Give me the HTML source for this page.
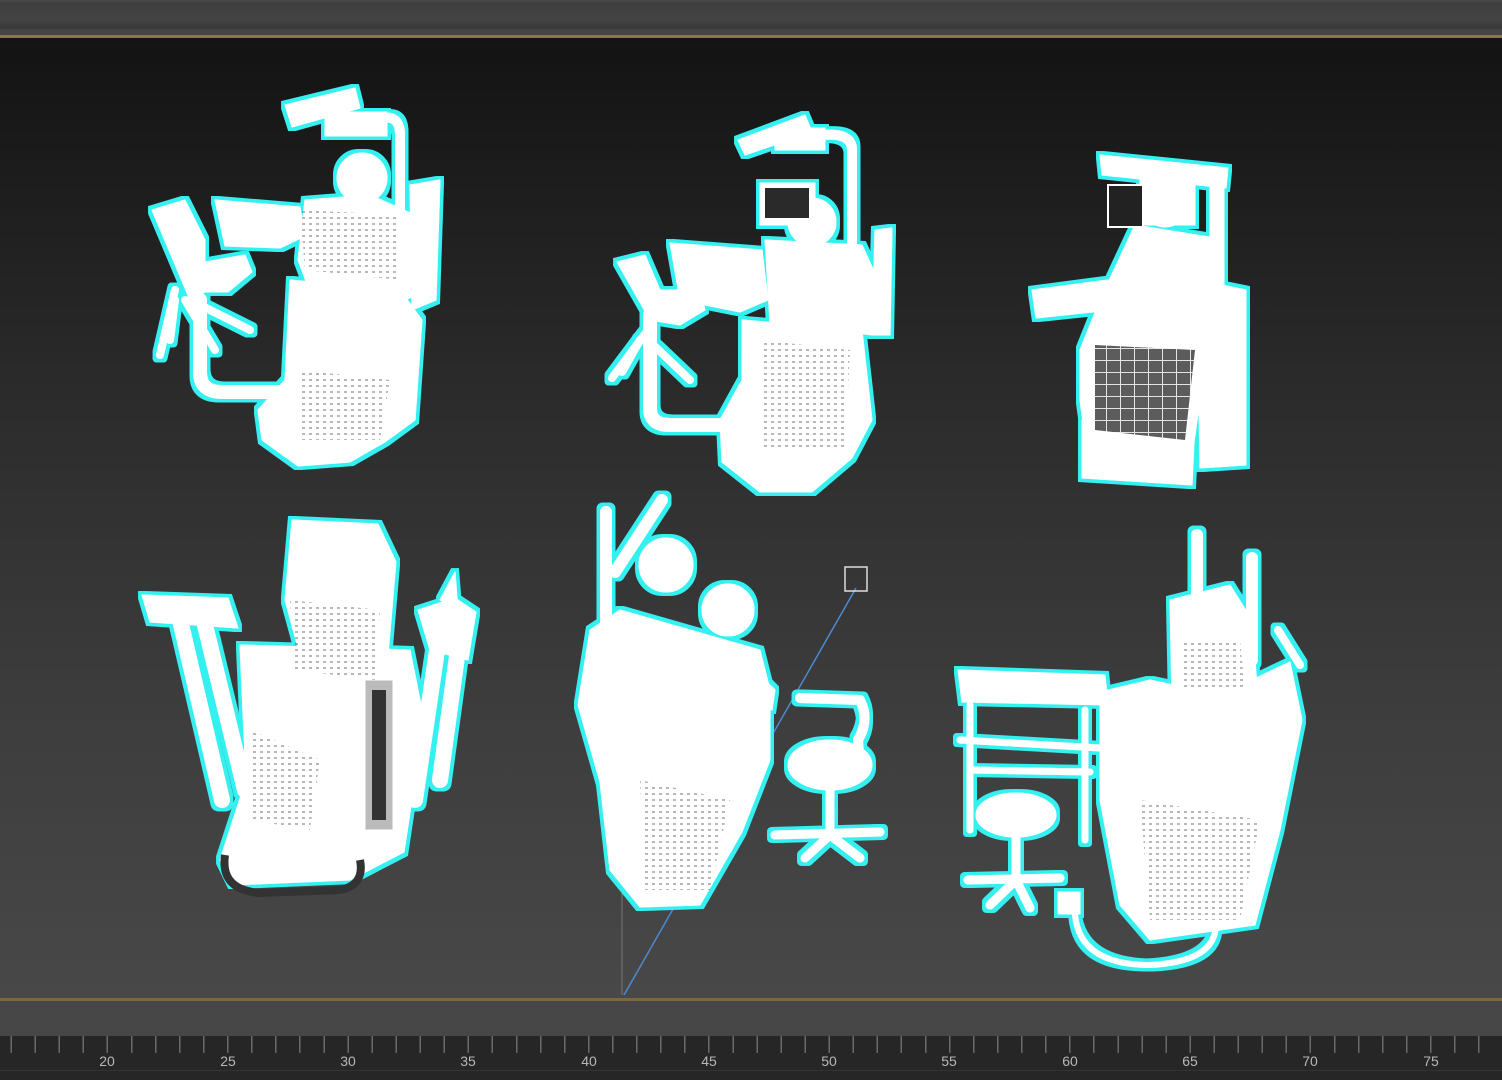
<!DOCTYPE html>
<html><head><meta charset="utf-8"><style>
html,body{margin:0;padding:0;width:1502px;height:1080px;overflow:hidden;background:#2a2a2a}
.top{position:absolute;left:0;top:0;width:1502px;height:36px;background:linear-gradient(#4a4a4a,#3e3e3e 3px,#444 20px,#383838 28px,#454545 30px)}
.g1{position:absolute;left:0;top:35px;width:1502px;height:3px;background:#8a7840}
.vp{position:absolute;left:0;top:38px;width:1502px;height:960px;background:linear-gradient(#131313,#2a2a2a 35%,#3d3d3d 70%,#484848)}
.g2{position:absolute;left:0;top:998px;width:1502px;height:3px;background:#7a6a3a}
.bar{position:absolute;left:0;top:1001px;width:1502px;height:35px;background:#474747}
.rul{position:absolute;left:0;top:1036px;width:1502px;height:44px;background:#262626}
.ticks{position:absolute;left:0;top:1036px;width:1502px;height:17px;background:repeating-linear-gradient(90deg,transparent 0,transparent 10.5px,#6a6a6a 10.5px,#6a6a6a 12px,transparent 12px,transparent 24.06px)}
.lab{position:absolute;top:1053px;font:14px "Liberation Sans",sans-serif;color:#b8b8b8;transform:translateX(-50%)}
.ln{position:absolute;left:0;top:1070px;width:1502px;height:1px;background:#333}
svg{position:absolute;left:0;top:0}
</style></head><body>
<div class="top"></div><div class="g1"></div><div class="vp"></div><div class="g2"></div><div class="bar"></div>
<div class="rul"></div><div class="ticks"></div><div class="ln"></div>
<div class="lab" style="left:107px">20</div><div class="lab" style="left:228px">25</div><div class="lab" style="left:348px">30</div><div class="lab" style="left:468px">35</div><div class="lab" style="left:589px">40</div><div class="lab" style="left:709px">45</div><div class="lab" style="left:829px">50</div><div class="lab" style="left:949px">55</div><div class="lab" style="left:1070px">60</div><div class="lab" style="left:1190px">65</div><div class="lab" style="left:1310px">70</div><div class="lab" style="left:1431px">75</div>
<svg width="1502" height="1000" viewBox="0 0 1502 1000">
<defs>
<filter id="o" x="-10%" y="-10%" width="120%" height="120%">
<feMorphology in="SourceAlpha" operator="dilate" radius="3.5" result="d"/>
<feFlood flood-color="#36f0f0"/><feComposite in2="d" operator="in" result="c"/>
<feMerge><feMergeNode in="c"/><feMergeNode in="SourceGraphic"/></feMerge>
</filter>
<pattern id="dots" width="7" height="6" patternUnits="userSpaceOnUse"><rect x="1" y="1" width="3" height="2" fill="#333"/></pattern>
<pattern id="grid" width="14" height="12" patternUnits="userSpaceOnUse"><rect width="14" height="12" fill="#333"/><path d="M0,0 L14,0 M0,0 L0,12" stroke="#ddd" stroke-width="2"/></pattern>
</defs>
<line x1="624" y1="995" x2="856" y2="588" stroke="#4a8ad0" stroke-width="1.5"/>
<line x1="622" y1="880" x2="622" y2="995" stroke="#777" stroke-width="1"/>
<g filter="url(#o)" fill="#fff" stroke="#fff" stroke-linejoin="round" stroke-linecap="round">
<!-- chair 1 -->
<polygon points="285,105 355,88 360,108 292,127"/>
<rect x="325" y="112" width="62" height="24"/>
<path d="M383,118 Q400,115 400,135 L400,300" fill="none" stroke-width="10"/>
<circle cx="362" cy="178" r="25"/>
<polygon points="305,200 370,195 415,215 422,292 395,305 310,292 298,260"/>
<polygon points="290,280 400,290 422,320 415,420 385,442 350,462 298,466 262,440 258,410 285,380"/>
<polygon points="410,185 440,180 436,300 412,310"/>
<polygon points="152,210 185,200 205,240 205,262 245,255 252,272 228,292 205,292 190,300"/>
<path d="M200,300 L200,372 Q200,392 222,392 L292,392" fill="none" stroke-width="14"/>
<path d="M175,290 L160,355 M185,300 L215,350 M190,300 L250,330 M175,300 L170,340" fill="none" stroke-width="8"/>
<polygon points="215,200 300,207 305,236 280,248 225,246"/>
<!-- chair 2 -->
<polygon points="738,140 805,115 812,132 745,155"/>
<rect x="775" y="128" width="50" height="22"/>
<path d="M822,135 Q852,132 852,150 L852,330" fill="none" stroke-width="10"/>
<rect x="760" y="183" width="55" height="42"/>
<circle cx="812" cy="222" r="24"/>
<polygon points="765,240 862,245 887,300 872,335 770,322"/>
<polygon points="742,320 862,330 872,420 852,458 812,492 760,492 722,462 720,420 742,380"/>
<polygon points="875,230 892,228 890,335 872,335"/>
<polygon points="617,262 645,255 660,290 700,290 705,310 680,325 650,320"/>
<polygon points="670,243 762,250 768,300 740,312 680,300"/>
<path d="M650,315 L650,408 Q650,425 670,425 L732,425" fill="none" stroke-width="14"/>
<path d="M648,330 L612,378 M648,340 L690,380 M640,340 L622,372" fill="none" stroke-width="8"/>
<!-- chair 3 -->
<polygon points="1100,155 1228,168 1226,188 1102,175"/>
<rect x="1210" y="170" width="14" height="120"/>
<rect x="1140" y="180" width="55" height="45"/>
<circle cx="1165" cy="205" r="22"/>
<polygon points="1135,225 1215,238 1215,300 1200,400 1190,470 1090,472 1080,400 1080,350 1100,300"/>
<polygon points="1197,280 1246,290 1246,465 1200,468"/>
<polygon points="1032,290 1108,280 1112,310 1036,318"/>
<polygon points="1082,420 1195,420 1192,485 1082,478"/>
<!-- chair 4 -->
<polygon points="142,595 228,598 238,628 150,622"/>
<path d="M180,620 L222,800 M205,625 L245,790" fill="none" stroke-width="16"/>
<polygon points="292,520 378,524 396,562 388,655 300,655 285,600"/>
<polygon points="240,645 410,650 424,720 404,852 350,880 232,885 220,860 246,780"/>
<path d="M440,630 L415,800 M462,620 L440,780" fill="none" stroke-width="16"/>
<polygon points="418,610 455,598 476,612 468,660 430,650"/>
<polygon points="440,600 455,572 458,610"/>
<rect x="365" y="680" width="28" height="150" fill="#bbb"/>
<!-- chair 5 -->
<path d="M606,512 L606,690 M662,500 L615,572" fill="none" stroke-width="12"/>
<circle cx="666" cy="565" r="27"/>
<circle cx="728" cy="610" r="26"/>
<polygon points="690,630 760,650 770,690 770,760 742,832 700,905 640,907 610,870 600,782 578,705 590,630 620,610"/>
<polygon points="725,640 775,690 772,710 700,700"/>
<ellipse cx="830" cy="765" rx="42" ry="25"/>
<path d="M800,698 L860,700 Q870,720 858,740 L860,770" fill="none" stroke-width="10"/>
<path d="M830,785 L830,835 M775,835 L880,832 M805,858 L830,835 L860,858" fill="none" stroke-width="9"/>
<!-- chair 6 -->
<path d="M1197,535 L1197,620 M1252,558 L1252,660" fill="none" stroke-width="12"/>
<polygon points="1170,600 1230,585 1252,620 1258,700 1172,702"/>
<polygon points="958,670 1105,675 1108,705 962,702"/>
<path d="M970,705 L970,830 M1085,710 L1085,840 M960,740 L1100,748 M970,770 L1090,772" fill="none" stroke-width="7"/>
<ellipse cx="1016" cy="815" rx="40" ry="22"/>
<path d="M1016,835 L1016,875 M968,880 L1060,878 M990,905 L1016,880 L1030,908" fill="none" stroke-width="9"/>
<polygon points="1100,692 1150,680 1220,695 1290,662 1302,720 1280,830 1255,925 1150,940 1120,905 1100,800"/>
<path d="M1278,630 L1300,665" fill="none" stroke-width="8"/>
<rect x="1058" y="892" width="22" height="22"/>
<path d="M1075,915 Q1080,965 1150,965 Q1215,962 1216,925" fill="none" stroke-width="6"/>
</g>
<!-- dark details -->
<rect x="765" y="188" width="44" height="30" fill="#2a2a2a"/>
<rect x="1108" y="185" width="35" height="42" fill="#222" stroke="#fff" stroke-width="2"/>
<path d="M1095,345 L1195,350 L1185,440 L1095,430Z" fill="url(#grid)" opacity=".8"/>
<g fill="url(#dots)" opacity=".35">
<path d="M290,600 L380,610 L375,680 L295,670Z"/>
<path d="M300,210 L400,215 L400,280 L305,270Z"/>
<path d="M300,370 L390,380 L380,440 L300,440Z"/>
<path d="M760,340 L850,350 L845,450 L760,450Z"/>
<path d="M640,780 L730,800 L710,890 L645,890Z"/>
<path d="M1140,800 L1260,820 L1240,920 L1150,920Z"/>
<path d="M1180,640 L1240,640 L1245,690 L1180,690Z"/>
<path d="M250,730 L320,760 L310,830 L250,820Z"/>
</g>
<rect x="372" y="690" width="14" height="130" fill="#333"/>
<path d="M225,855 Q220,890 260,893 L340,890 Q365,885 360,860" fill="none" stroke="#333" stroke-width="8"/>
<rect x="845" y="567" width="22" height="24" fill="none" stroke="#ddd" stroke-width="1.5"/>
</svg>
</body></html>
